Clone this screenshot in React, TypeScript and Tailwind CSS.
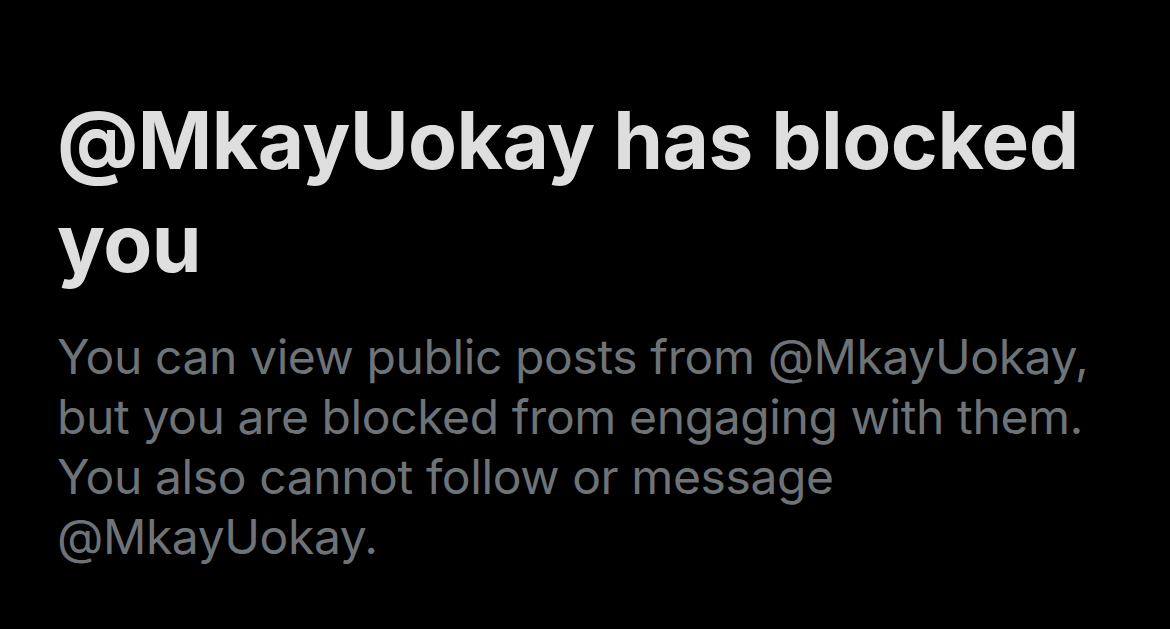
import React from 'react';

export default function App() {
  return (
    <div className="w-[1170px] h-[629px] bg-black overflow-hidden font-['Inter',sans-serif]">
      <div className="pl-[57px] pt-[88px]">
        <h1 className="text-[80px] leading-[103px] font-bold text-[#dedede] tracking-[-0.5px]">
          @MkayUokay has blocked
          <br />
          you
        </h1>
        <p className="mt-[33px] text-[48px] leading-[60px] text-[#6e7378] tracking-[-0.4px]">
          You can view public posts from @MkayUokay,
          <br />
          but you are blocked from engaging with them.
          <br />
          You also cannot follow or message
          <br />
          @MkayUokay.
        </p>
      </div>
    </div>
  );
}
